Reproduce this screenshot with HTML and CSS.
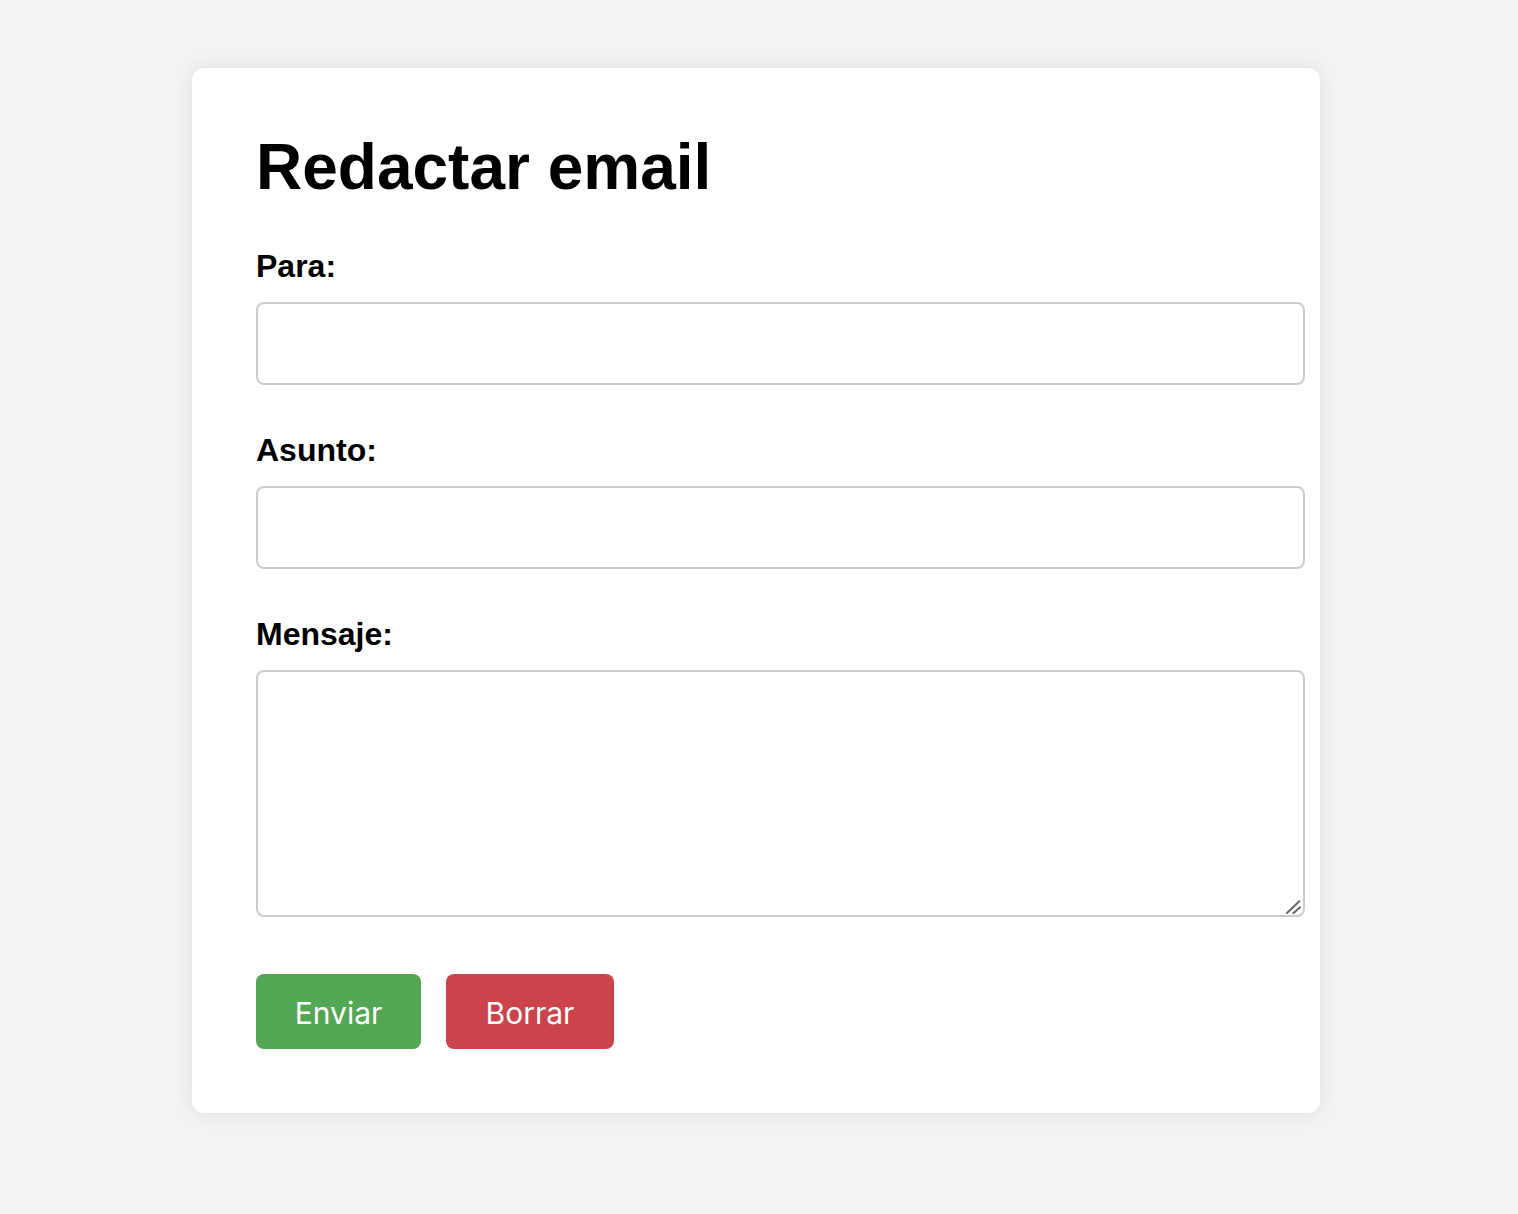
FILE: index.html
```html
<!DOCTYPE html>
<html lang="es">
<head>
<meta charset="utf-8">
<title>Redactar email</title>
<link rel="stylesheet" href="styles.css">
</head>
<body>
<div class="page">
  <form class="card">
    <h1 class="title">Redactar email</h1>
    <label class="label" for="para">Para:</label>
    <input class="field" id="para" type="text">
    <label class="label" for="asunto">Asunto:</label>
    <input class="field" id="asunto" type="text">
    <label class="label" for="mensaje">Mensaje:</label>
    <div class="area-wrap">
      <textarea class="area" id="mensaje"></textarea>
      <svg class="grip" width="16" height="16" viewBox="0 0 16 16" aria-hidden="true">
        <path d="M2 15 L14.3 3.2 M8.3 15.2 L15 9.2" stroke="#666" stroke-width="2" stroke-linecap="round" fill="none"/>
      </svg>
    </div>
    <div class="actions">
      <button class="btn btn-send" type="button">Enviar</button>
      <button class="btn btn-clear" type="button">Borrar</button>
    </div>
  </form>
</div>
</body>
</html>
```
FILE: styles.css
```css
html, body {
  margin: 0;
  padding: 0;
  background: #f4f4f4;
  font-family: "Liberation Sans", Arial, sans-serif;
  color: #000;
}
.page {
  padding: 68px 0 100px 192px;
}
.card {
  box-sizing: border-box;
  width: 1128px;
  background: #fff;
  border-radius: 12px;
  box-shadow: 0 0 20px rgba(0, 0, 0, 0.1);
  padding: 62px 64px 64px;
  display: flex;
  flex-direction: column;
}
.title {
  margin: 0 0 44px;
  font-size: 64px;
  font-weight: bold;
  line-height: normal;
}
.label {
  display: block;
  font-size: 32px;
  font-weight: bold;
  line-height: normal;
  margin-bottom: 17px;
}
.field,
.area {
  display: block;
  box-sizing: border-box;
  border: 2px solid #ccc;
  border-radius: 8px;
  background: #fff;
  font-family: "Liberation Sans", Arial, sans-serif;
  font-size: 28px;
  outline: none;
}
.field {
  width: calc(100% + 49px);
  height: 83px;
  margin: 0 0 47px;
  padding: 0 22px;
}
.area-wrap {
  position: relative;
  width: calc(100% + 49px);
  margin-bottom: 57px;
}
.area {
  width: 100%;
  height: 247px;
  margin: 0;
  padding: 16px 22px;
  resize: none;
}
.grip {
  position: absolute;
  right: 4px;
  bottom: 3px;
  pointer-events: none;
}
.actions {
  display: flex;
  gap: 25px;
}
.btn {
  height: 75px;
  border: none;
  border-radius: 8px;
  color: #fff;
  font-family: Inter, "Noto Sans", sans-serif;
  font-size: 30px;
  padding: 2px 0 0;
  display: flex;
  align-items: center;
  justify-content: center;
}
.btn-send {
  width: 165px;
  background: #53a653;
}
.btn-clear {
  width: 168px;
  background: #cb444b;
}
```
